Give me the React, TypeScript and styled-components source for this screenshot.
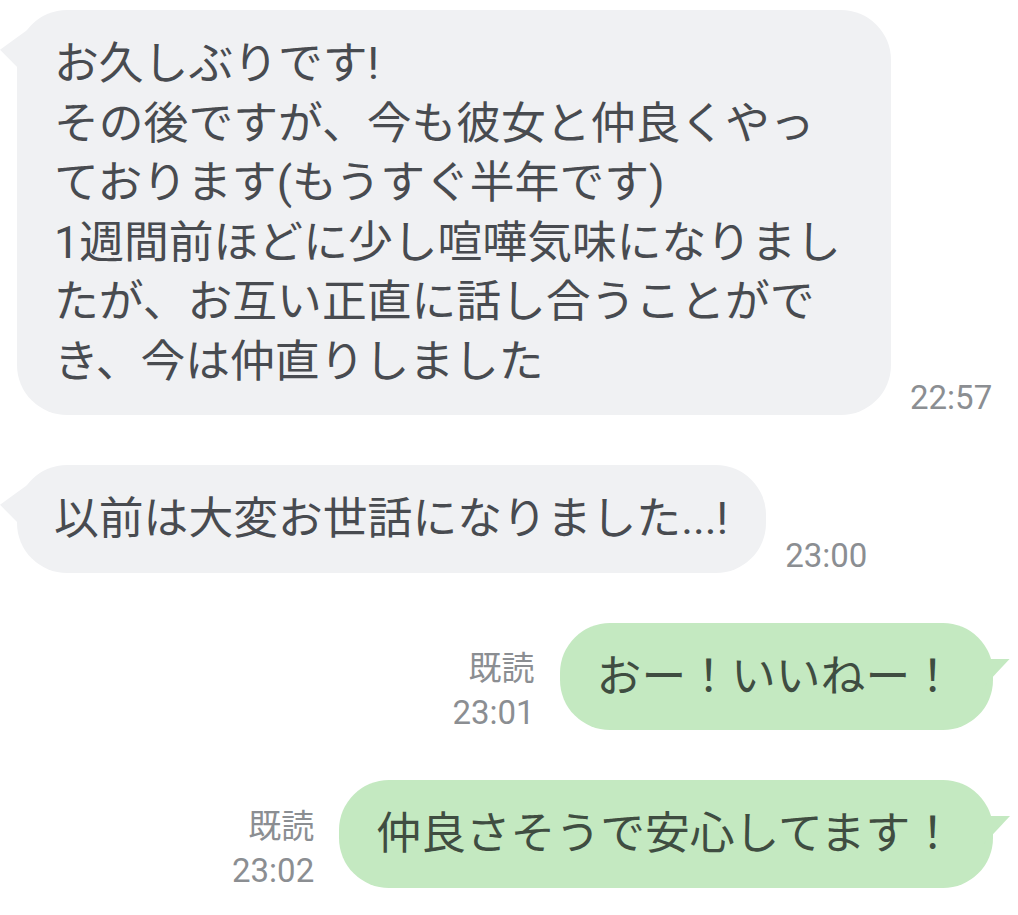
import React from 'react'
import styled, { createGlobalStyle, css } from 'styled-components'

const GlobalStyle = createGlobalStyle`
  html, body {
    margin: 0;
    padding: 0;
    background: #ffffff;
  }
  body {
    font-family: Roboto, "Noto Sans CJK JP", sans-serif;
  }
`

interface SideProps {
  $mine: boolean
}

interface BubbleProps extends SideProps {
  $wide?: boolean
}

const Chat = styled.div`
  display: flex;
  flex-direction: column;
  gap: 50px;
  padding: 10px 25px 20px 17px;
  width: 1018px;
  box-sizing: border-box;
`

// own messages sit on the right, the read/time column goes before the bubble
const Row = styled.div<SideProps>`
  display: flex;
  align-items: flex-end;
  justify-content: flex-start;
  flex-direction: ${({ $mine }) => ($mine ? 'row-reverse' : 'row')};
  gap: ${({ $mine }) => ($mine ? '25px' : '19px')};
`

const leftTail = css`
  left: -17px;
  top: 18px;
  width: 30px;
  height: 52px;
  clip-path: polygon(0 42%, 100% 0, 100% 100%);
`

const rightTail = css`
  right: -17px;
  top: 36px;
  width: 28px;
  height: 30px;
  clip-path: polygon(0 0, 100% 0, 0 100%);
`

const Bubble = styled.div<BubbleProps>`
  position: relative;
  box-sizing: border-box;
  width: ${({ $wide }) => ($wide ? '874px' : 'auto')};
  padding: 24px 38px 24px 37px;
  border-radius: 50px;
  background: ${({ $mine }) => ($mine ? '#c4e9c1' : '#f0f1f3')};
  color: ${({ $mine }) => ($mine ? '#3f4d41' : '#484b50')};
  font-size: 44.8px;
  line-height: 59.5px;
  white-space: nowrap;

  &::before {
    content: '';
    position: absolute;
    background: inherit;
    ${({ $mine }) => ($mine ? rightTail : leftTail)}
  }
`

const Line = styled.div``

const Meta = styled.div`
  display: flex;
  flex-direction: column;
  align-items: flex-end;
  gap: 10px;
  color: #8b8e92;
  font-size: 33px;
  line-height: 34px;
  white-space: nowrap;
`

interface Message {
  mine: boolean
  lines: string[]
  time: string
  read?: boolean
  wide?: boolean
}

const messages: Message[] = [
  {
    mine: false,
    wide: true,
    time: '22:57',
    lines: [
      'お久しぶりです!',
      'その後ですが、今も彼女と仲良くやっ',
      'ております(もうすぐ半年です)',
      '1週間前ほどに少し喧嘩気味になりまし',
      'たが、お互い正直に話し合うことがで',
      'き、今は仲直りしました',
    ],
  },
  { mine: false, time: '23:00', lines: ['以前は大変お世話になりました...!'] },
  { mine: true, read: true, time: '23:01', lines: ['おー！いいねー！'] },
  { mine: true, read: true, time: '23:02', lines: ['仲良さそうで安心してます！'] },
]

const App: React.FC = () => {
  return (
    <>
      <GlobalStyle />
      <Chat>
        {messages.map((m, i) => (
          <Row key={i} $mine={m.mine}>
            <Bubble $mine={m.mine} $wide={m.wide}>
              {m.lines.map((l, j) => (
                <Line key={j}>{l}</Line>
              ))}
            </Bubble>
            <Meta>
              {m.read && <span>既読</span>}
              <span>{m.time}</span>
            </Meta>
          </Row>
        ))}
      </Chat>
    </>
  )
}

export default App
